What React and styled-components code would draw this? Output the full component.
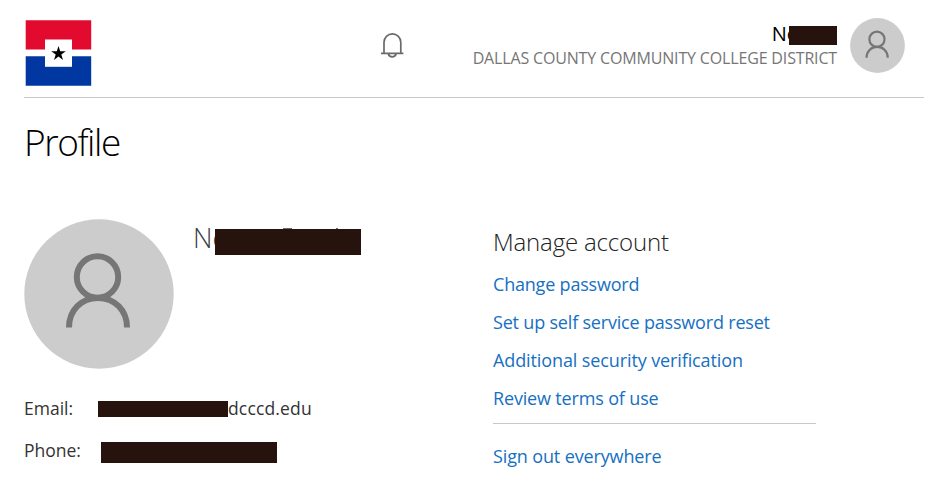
import React from 'react';
import styled, { createGlobalStyle } from 'styled-components';

const GlobalStyle = createGlobalStyle`
  *, *::before, *::after { box-sizing: border-box; }
  body {
    margin: 0;
    background: #fff;
    color: #404040;
    font-family: "Open Sans", "Noto Sans", sans-serif;
  }
`;

const Page = styled.div`
  width: 948px;
  height: 494px;
  padding: 0 24px;
  overflow: hidden;
`;

const Header = styled.header`
  display: grid;
  grid-template-columns: 356px 24px 1fr;
  align-items: start;
  height: 98px;
  padding: 18px 19px 0 0;
  border-bottom: 1px solid #c8c8c8;
`;

const Logo = styled.svg`
  display: block;
  width: 68px;
  height: 68px;
  margin: 1px 0 0 1px;
`;

const BellButton = styled.button`
  width: 24px;
  height: 30px;
  margin-top: 13px;
  padding: 0;
  border: 0;
  background: none;

  svg { display: block; }
`;

const User = styled.div`
  display: flex;
  justify-content: flex-end;
  gap: 13px;
`;

const UserText = styled.div`
  display: flex;
  flex-direction: column;
  align-items: flex-end;
  white-space: nowrap;
`;

const UserName = styled.div`
  display: flex;
  align-items: center;
  height: 31px;
  font-size: 20px;
  line-height: 31px;
  color: #000;
`;

const Organization = styled.div`
  font-size: 16px;
  line-height: 22px;
  margin-top: -2px;
  letter-spacing: -0.16px;
  color: #767676;
`;

const Redaction = styled.span`
  position: relative;
  flex: none;
  width: ${(p) => p.$width}px;
  height: ${(p) => p.$height}px;
  margin-left: ${(p) => p.$left || 0}px;
  margin-top: ${(p) => p.$top || 0}px;
  background: #27130e;
`;

const StrokeTip = styled.i`
  position: absolute;
  top: -1px;
  left: ${(p) => p.$x}px;
  width: ${(p) => p.$width}px;
  height: 1px;
  background: #6f6866;
`;

const AvatarCircle = styled.svg`
  display: block;
  flex: none;
  width: ${(p) => p.$size}px;
  height: ${(p) => p.$size}px;
`;

const Title = styled.h1`
  margin: 19px 0 52px;
  font-size: 37px;
  line-height: 50px;
  font-weight: 300;
  letter-spacing: -1.45px;
  color: #000;
`;

const Columns = styled.main`
  display: grid;
  grid-template-columns: 469px 323px;
`;

const Identity = styled.div`
  display: flex;
  gap: 19px;
  height: 168px;
`;

const FullName = styled.div`
  display: flex;
  height: 38px;
  font-size: 27px;
  line-height: 38px;
  font-weight: 300;
`;

const Detail = styled.div`
  display: flex;
  align-items: center;
  height: 42px;
  font-size: 17.5px;
  line-height: 42px;
  color: #333;
`;

const Label = styled.span`
  width: ${(p) => p.$width}px;
`;

const DetailValue = styled.span`
  letter-spacing: 0.15px;
`;

const Manage = styled.section`
  display: flex;
  flex-direction: column;
  padding-top: 7px;
`;

const SectionTitle = styled.h2`
  margin: 0 0 7px;
  font-size: 24px;
  line-height: 32px;
  font-weight: 300;
  letter-spacing: -0.17px;
  color: #222;
`;

const Action = styled.a`
  font-size: 18px;
  line-height: 38px;
  letter-spacing: ${(p) => p.$spacing}px;
  color: #1670c2;
  text-decoration: none;
  white-space: nowrap;
`;

const Divider = styled.hr`
  width: 100%;
  height: 1px;
  margin: 6px 0 13px;
  border: 0;
  background: #c8c8c8;
`;

const actions = [
  ['Change password', -0.2],
  ['Set up self service password reset', -0.19],
  ['Additional security verification', -0.11],
  ['Review terms of use', -0.16],
];

function Avatar({ size }) {
  return (
    <AvatarCircle $size={size} viewBox="0 0 150 150">
      <circle cx="75" cy="75" r="74.7" fill="#ccc" />
      <g fill="none" stroke="#767676" strokeWidth="6">
        <circle cx="73.5" cy="58" r="20.7" />
        <path d="M45 108.5C45 91 57.5 79 74 79S103 91 103 108.5" />
      </g>
    </AvatarCircle>
  );
}

export default function App() {
  return (
    <>
      <GlobalStyle />
      <Page>
        <Header>
          <Logo viewBox="25 19 68 68">
            <path fill="#e20a2e" d="M25.7 20.3h65.5v29.2H25.7z" />
            <path fill="#0037a0" d="M25.7 56.3h65.5v29.4H25.7z" />
            <path fill="#fff" d="M45 39.5h27v27.3H45z" />
            <path
              fill="#000"
              d="M58.5 46l1.7 5.3 5.6-.1-4.5 3.3 1.7 5.4-4.5-3.3-4.5 3.3 1.7-5.4-4.5-3.3 5.6.1z"
            />
          </Logo>
          <BellButton aria-label="Notifications">
            <svg width="24" height="30" viewBox="0 0 24 30" fill="none" stroke="#6a6a6a" strokeWidth="1.7">
              <path d="M4 22.3V11.3a8.4 8.4 0 0 1 16.8 0V22.3M1 22.4h22.4M8.3 22.8a4 4 0 0 0 7.8 0" />
            </svg>
          </BellButton>
          <User>
            <UserText>
              <UserName>
                Ne
                <Redaction $width={48} $height={19} $left={-9} $top={4} />
              </UserName>
              <Organization>DALLAS COUNTY COMMUNITY COLLEGE DISTRICT</Organization>
            </UserText>
            <Avatar size={55} />
          </User>
        </Header>

        <Title>Profile</Title>

        <Columns>
          <section>
            <Identity>
              <Avatar size={150} />
              <FullName>
                Ne
                <Redaction $width={146} $height={26} $left={-12} $top={10}>
                  <StrokeTip $x={68} $width={9} />
                  <StrokeTip $x={121} $width={2} />
                </Redaction>
              </FullName>
            </Identity>
            <Detail>
              <Label $width={74}>Email:</Label>
              <Redaction $width={130} $height={16} $top={2} />
              <DetailValue>dcccd.edu</DetailValue>
            </Detail>
            <Detail>
              <Label $width={77}>Phone:</Label>
              <Redaction $width={176} $height={21} $top={5} />
            </Detail>
          </section>

          <Manage>
            <SectionTitle>Manage account</SectionTitle>
            {actions.map(([text, spacing]) => (
              <Action key={text} $spacing={spacing}>{text}</Action>
            ))}
            <Divider />
            <Action $spacing={-0.13}>Sign out everywhere</Action>
          </Manage>
        </Columns>
      </Page>
    </>
  );
}
